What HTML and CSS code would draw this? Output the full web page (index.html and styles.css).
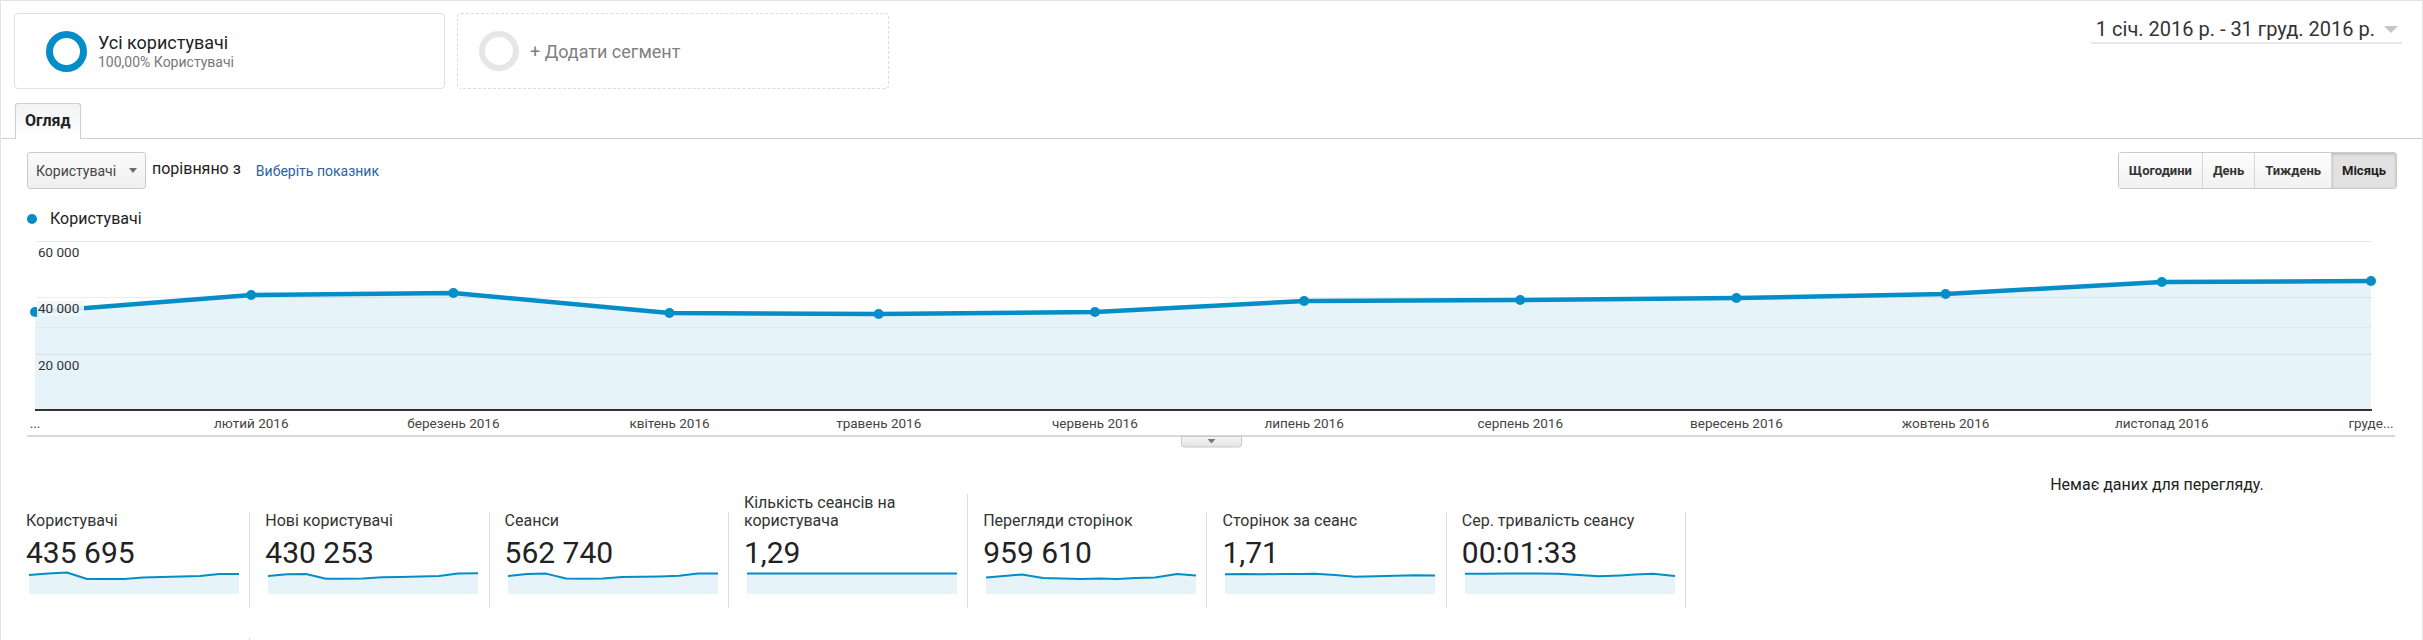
FILE: index.html
```html
<!DOCTYPE html>
<html lang="uk">
<head>
<meta charset="utf-8">
<title>Огляд аудиторії</title>
<link rel="stylesheet" href="styles.css">
</head>
<body>
<div class="page">
  <header class="top">
    <div class="segments">
      <div class="seg seg-active">
        <span class="ring ring-blue"></span>
        <div class="seg-text">
          <div class="seg-title">Усі користувачі</div>
          <div class="seg-sub">100,00% Користувачі</div>
        </div>
      </div>
      <div class="seg seg-add">
        <span class="ring ring-gray"></span>
        <div class="seg-add-text">+ Додати сегмент</div>
      </div>
    </div>
    <div class="date">1 січ. 2016 р. - 31 груд. 2016 р.<span class="date-caret"></span></div>
  </header>

  <nav class="tabs"><div class="tab">Огляд</div></nav>

  <div class="controls">
    <div class="left-controls">
      <div class="select">Користувачі<span class="caret"></span></div>
      <span class="vs">порівняно з</span>
      <a class="pick">Виберіть показник</a>
    </div>
    <div class="btn-group">
      <button class="btn">Щогодини</button>
      <button class="btn">День</button>
      <button class="btn">Тиждень</button>
      <button class="btn btn-active">Місяць</button>
    </div>
  </div>

  <div class="legend"><span class="dot"></span>Користувачі</div>

  <svg class="chart" width="2421" height="218" viewBox="1 232 2421 218" xmlns="http://www.w3.org/2000/svg">
    <defs>
      <linearGradient id="hg" x1="0" y1="0" x2="0" y2="1">
        <stop offset="0" stop-color="#f6f6f6"/>
        <stop offset="1" stop-color="#e4e4e4"/>
      </linearGradient>
    </defs>
    <line x1="36" y1="241.5" x2="2372" y2="241.5" stroke="#e6e6e6" stroke-width="1"/>
    <polygon fill="#e6f3f9" points="35,312 251.2,295 453.4,293 669.5,313 878.7,314 1094.9,312 1304.1,301 1520.2,300 1736.4,298 1945.6,294 2161.8,282 2371,281 2371,410 35,410"/>
    <line x1="36" y1="297.5" x2="2372" y2="297.5" stroke="#000" stroke-opacity="0.07" stroke-width="1"/>
    <line x1="36" y1="327.5" x2="2372" y2="327.5" stroke="#000" stroke-opacity="0.035" stroke-width="1"/>
    <line x1="36" y1="354.5" x2="2372" y2="354.5" stroke="#000" stroke-opacity="0.07" stroke-width="1"/>
    <line x1="35" y1="410" x2="2372" y2="410" stroke="#333" stroke-width="2"/>
    <polyline fill="none" stroke="#058dc7" stroke-width="4.5" stroke-linejoin="round" points="35,312 251.2,295 453.4,293 669.5,313 878.7,314 1094.9,312 1304.1,301 1520.2,300 1736.4,298 1945.6,294 2161.8,282 2371,281"/>
    <g fill="#058dc7">
      <circle cx="35" cy="312" r="5"/>
      <circle cx="251.2" cy="295" r="5"/>
      <circle cx="453.4" cy="293" r="5"/>
      <circle cx="669.5" cy="313" r="5"/>
      <circle cx="878.7" cy="314" r="5"/>
      <circle cx="1094.9" cy="312" r="5"/>
      <circle cx="1304.1" cy="301" r="5"/>
      <circle cx="1520.2" cy="300" r="5"/>
      <circle cx="1736.4" cy="298" r="5"/>
      <circle cx="1945.6" cy="294" r="5"/>
      <circle cx="2161.8" cy="282" r="5"/>
      <circle cx="2371" cy="281" r="5"/>
    </g>
    <rect x="37" y="301" width="47" height="15" fill="#eef7fb" fill-opacity="0.9"/>
    <g class="axis-y">
      <text x="38" y="257">60 000</text>
      <text x="38" y="313">40 000</text>
      <text x="38" y="370">20 000</text>
    </g>
    <g class="axis-x" text-anchor="middle">
      <text x="35" y="428">...</text>
      <text x="251.2" y="428">лютий 2016</text>
      <text x="453.4" y="428">березень 2016</text>
      <text x="669.5" y="428">квітень 2016</text>
      <text x="878.7" y="428">травень 2016</text>
      <text x="1094.9" y="428">червень 2016</text>
      <text x="1304.1" y="428">липень 2016</text>
      <text x="1520.2" y="428">серпень 2016</text>
      <text x="1736.4" y="428">вересень 2016</text>
      <text x="1945.6" y="428">жовтень 2016</text>
      <text x="2161.8" y="428">листопад 2016</text>
      <text x="2371" y="428">груде...</text>
    </g>
    <rect x="27" y="435" width="2368" height="2" fill="#d8d8d8"/>
    <path d="M1181.5 436.5 H1241.5 V444 Q1241.5 447 1238.5 447 H1184.5 Q1181.5 447 1181.5 444 Z" fill="url(#hg)" stroke="#c8c8c8" stroke-width="1"/>
    <path d="M1207.5 439 H1215.5 L1211.5 443.5 Z" fill="#777"/>
  </svg>

  <section class="summary">
    <div class="metrics">
      <div class="metric">
        <div class="m-label">Користувачі</div>
        <div class="m-value">435 695</div>
        <svg class="spark" width="210" height="24" viewBox="0 0 210 24"><polygon class="sp-fill" points="0,4 19,2.5 38,1.5 58,8 76,8 95,8 114,6.5 133,6 152,5.5 171,5 190,3 210,3 210,23 0,23"/><polyline class="sp-line" points="0,4 19,2.5 38,1.5 58,8 76,8 95,8 114,6.5 133,6 152,5.5 171,5 190,3 210,3"/></svg>
      </div>
      <div class="metric">
        <div class="m-label">Нові користувачі</div>
        <div class="m-value">430 253</div>
        <svg class="spark" width="210" height="24" viewBox="0 0 210 24"><polygon class="sp-fill" points="0,5 19,3.3 38,3 58,7.7 76,7.8 95,7.6 114,6.3 133,6 152,5.6 171,5 190,2.5 210,2.3 210,23 0,23"/><polyline class="sp-line" points="0,5 19,3.3 38,3 58,7.7 76,7.8 95,7.6 114,6.3 133,6 152,5.6 171,5 190,2.5 210,2.3"/></svg>
      </div>
      <div class="metric">
        <div class="m-label">Сеанси</div>
        <div class="m-value">562 740</div>
        <svg class="spark" width="210" height="24" viewBox="0 0 210 24"><polygon class="sp-fill" points="0,5 19,3 38,2.6 58,7.5 76,7.8 95,7.6 114,6 133,5.8 152,5.5 171,4.8 190,2.5 210,2.5 210,23 0,23"/><polyline class="sp-line" points="0,5 19,3 38,2.6 58,7.5 76,7.8 95,7.6 114,6 133,5.8 152,5.5 171,4.8 190,2.5 210,2.5"/></svg>
      </div>
      <div class="metric">
        <div class="m-label">Кількість сеансів на користувача</div>
        <div class="m-value">1,29</div>
        <svg class="spark" width="210" height="24" viewBox="0 0 210 24"><polygon class="sp-fill" points="0,2.5 40,2.4 80,2.6 120,2.5 160,2.4 210,2.5 210,23 0,23"/><polyline class="sp-line" points="0,2.5 40,2.4 80,2.6 120,2.5 160,2.4 210,2.5"/></svg>
      </div>
      <div class="metric">
        <div class="m-label">Перегляди сторінок</div>
        <div class="m-value">959 610</div>
        <svg class="spark" width="210" height="24" viewBox="0 0 210 24"><polygon class="sp-fill" points="0,6.5 18,5 36,3.5 57,7 76,7.5 95,8 114,7.5 131,8 150,7 169,6.5 191,3 210,4.5 210,23 0,23"/><polyline class="sp-line" points="0,6.5 18,5 36,3.5 57,7 76,7.5 95,8 114,7.5 131,8 150,7 169,6.5 191,3 210,4.5"/></svg>
      </div>
      <div class="metric">
        <div class="m-label">Сторінок за сеанс</div>
        <div class="m-value">1,71</div>
        <svg class="spark" width="210" height="24" viewBox="0 0 210 24"><polygon class="sp-fill" points="0,3.3 19,3 38,3.2 57,3 76,3 90,2.7 110,4 130,5.7 150,5.2 170,4.8 190,4.3 210,4.5 210,23 0,23"/><polyline class="sp-line" points="0,3.3 19,3 38,3.2 57,3 76,3 90,2.7 110,4 130,5.7 150,5.2 170,4.8 190,4.3 210,4.5"/></svg>
      </div>
      <div class="metric">
        <div class="m-label">Сер. тривалість сеансу</div>
        <div class="m-value">00:01:33</div>
        <svg class="spark" width="210" height="24" viewBox="0 0 210 24"><polygon class="sp-fill" points="0,2.7 20,2.7 45,2.5 70,2.6 93,2.7 114,4 134,5.3 155,4.5 170,3.6 188,2.7 210,5 210,23 0,23"/><polyline class="sp-line" points="0,2.7 20,2.7 45,2.5 70,2.6 93,2.7 114,4 134,5.3 155,4.5 170,3.6 188,2.7 210,5"/></svg>
      </div>
      <div class="metric metric-next"></div>
    </div>
    <div class="pie-panel">Немає даних для перегляду.</div>
  </section>
</div>
</body>
</html>
```

FILE: styles.css
```css
html, body {
  margin: 0;
  padding: 0;
  background: #fff;
}

body {
  font-family: Roboto, "Liberation Sans", Arial, sans-serif;
  color: #333;
}

.page {
  width: 2423px;
  height: 640px;
  box-sizing: border-box;
  border: 1px solid #e3e3e3;
  border-bottom: none;
  overflow: hidden;
}

/* ---------- header ---------- */
.top {
  display: flex;
  justify-content: space-between;
  align-items: flex-start;
  padding: 12px 20px 0 13px;
}

.segments {
  display: flex;
  gap: 12px;
}

.seg {
  box-sizing: border-box;
  height: 76px;
  border-radius: 4px;
  display: flex;
  align-items: center;
}

.seg-active {
  width: 431px;
  border: 1px solid #e0e0e0;
  padding-left: 31px;
}

.seg-add {
  width: 432px;
  border: 1px dashed #dcdcdc;
  padding-left: 21px;
}

.ring {
  box-sizing: border-box;
  width: 41px;
  height: 41px;
  border-radius: 50%;
  flex: none;
}

.ring-blue {
  border: 7px solid #058dc7;
}

.ring-gray {
  width: 40px;
  height: 40px;
  border: 6px solid #e6e6e6;
}

.seg-text {
  margin-left: 11px;
}

.seg-title {
  font-size: 18px;
  line-height: 21px;
  color: #222;
}

.seg-sub {
  font-size: 14px;
  line-height: 16px;
  color: #777;
  margin-top: 1px;
}

.seg-add-text {
  margin-left: 11px;
  font-size: 18px;
  line-height: 21px;
  color: #808080;
}

.date {
  display: flex;
  align-items: center;
  margin-top: 4px;
  padding: 0 0 1px 5px;
  font-size: 20px;
  line-height: 24px;
  color: #333;
  border-bottom: 2px solid #e8e8e8;
}

.date-caret {
  width: 0;
  height: 0;
  margin: 0 4px 0 9px;
  border-left: 7px solid transparent;
  border-right: 7px solid transparent;
  border-top: 7px solid #c6c6c6;
}

/* ---------- tabs ---------- */
.tabs {
  margin-top: 14px;
  padding-left: 14px;
  border-bottom: 1px solid #cfcfcf;
  display: flex;
}

.tab {
  margin-bottom: -1px;
  padding: 8px 9px 9px 9px;
  border: 1px solid #cfcfcf;
  border-bottom: none;
  border-radius: 3px 3px 0 0;
  background: linear-gradient(#f3f3f3, #ffffff);
  font-size: 16px;
  line-height: 18px;
  font-weight: 700;
  color: #222;
}

/* ---------- controls ---------- */
.controls {
  margin-top: 13px;
  padding: 0 25px 0 26px;
  display: flex;
  justify-content: space-between;
  align-items: flex-start;
}

.left-controls {
  display: flex;
  align-items: flex-start;
}

.select {
  box-sizing: border-box;
  width: 119px;
  height: 37px;
  padding-left: 8px;
  border: 1px solid #cbcbcb;
  border-radius: 3px;
  background: linear-gradient(#fafafa, #efefef);
  display: flex;
  align-items: center;
  font-size: 14px;
  color: #444;
}

.caret {
  width: 0;
  height: 0;
  margin-left: auto;
  margin-right: 8px;
  border-left: 4.5px solid transparent;
  border-right: 4.5px solid transparent;
  border-top: 5px solid #6b6b6b;
}

.vs {
  margin: 8px 0 0 6px;
  font-size: 16px;
  line-height: 18px;
  color: #222;
}

.pick {
  margin: 11px 0 0 15px;
  font-size: 14px;
  line-height: 16px;
  color: #2a63a2;
  cursor: pointer;
}

.btn-group {
  display: flex;
  height: 37px;
  box-sizing: border-box;
  border: 1px solid #cbcbcb;
  border-radius: 3px;
  overflow: hidden;
}

.btn {
  font-family: Roboto, "Liberation Sans", Arial, sans-serif;
  font-size: 13px;
  font-weight: 700;
  color: #333;
  padding: 0 10px;
  margin: 0;
  border: none;
  border-left: 1px solid #d6d6d6;
  background: linear-gradient(#fdfdfd, #f1f1f1);
}

.btn:first-child {
  border-left: none;
}

.btn-active {
  background: #e2e2e2;
  box-shadow: inset 0 1px 3px rgba(0, 0, 0, 0.22);
  color: #222;
}

/* ---------- legend & chart ---------- */
.legend {
  margin-top: 21px;
  padding-left: 26px;
  display: flex;
  align-items: center;
  font-size: 16px;
  line-height: 18px;
  color: #222;
}

.dot {
  width: 10px;
  height: 10px;
  border-radius: 50%;
  background: #058dc7;
  margin-right: 13px;
}

.chart {
  display: block;
  margin-top: 4px;
}

.axis-y text {
  font-family: Roboto, "Liberation Sans", Arial, sans-serif;
  font-size: 13.5px;
  fill: #333;
}

.axis-x text {
  font-family: Roboto, "Liberation Sans", Arial, sans-serif;
  font-size: 13.5px;
  fill: #444;
}

/* ---------- summary ---------- */
.summary {
  display: flex;
  align-items: flex-start;
}

.metrics {
  box-sizing: border-box;
  width: 1686px;
  padding: 44px 0 0 10px;
  display: flex;
  flex-wrap: wrap;
  align-items: flex-end;
  row-gap: 29px;
}

.metric {
  box-sizing: border-box;
  width: 239.3px;
  padding: 0 14px 13px 15px;
  border-right: 1px solid #dcdcdc;
}

.metric-next {
  height: 30px;
}

.m-label {
  font-size: 16px;
  line-height: 18px;
  color: #333;
}

.m-value {
  margin-top: 5px;
  font-size: 30px;
  line-height: 36px;
  color: #222;
}

.spark {
  display: block;
  margin-left: 3px;
}

.sp-fill {
  fill: #e6f3f9;
}

.sp-line {
  fill: none;
  stroke: #058dc7;
  stroke-width: 2;
  stroke-linejoin: round;
}

.pie-panel {
  flex: 0 0 530px;
  margin-left: auto;
  padding-top: 26px;
  text-align: center;
  font-size: 16px;
  line-height: 18px;
  color: #222;
}
```
